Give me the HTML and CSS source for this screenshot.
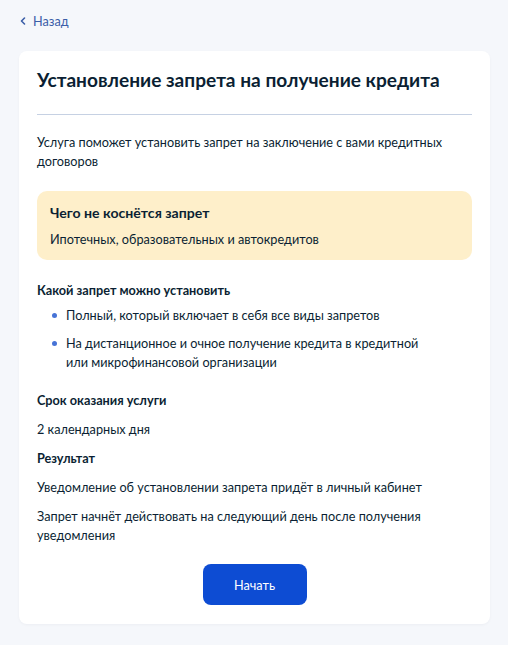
FILE: index.html
```html
<!doctype html>
<html lang="ru">
<head>
  <meta charset="utf-8">
  <title>Установление запрета на получение кредита</title>
  <link rel="stylesheet" href="styles.css">
</head>
<body>
<div class="page">
  <a class="back" href="#">
    <svg class="back-icon" width="6" height="8" viewBox="0 0 6 8"><path d="M4.5 1 L1.5 4 L4.5 7" fill="none" stroke="currentColor" stroke-width="1.6" stroke-linecap="round" stroke-linejoin="round"/></svg>
    Назад
  </a>

  <div class="card">
    <h1 class="title">Установление запрета на получение кредита</h1>
    <hr class="divider">

    <p class="text">Услуга поможет установить запрет на заключение с вами кредитных договоров</p>

    <div class="notice">
      <h3 class="notice-title">Чего не коснётся запрет</h3>
      <p class="notice-text">Ипотечных, образовательных и автокредитов</p>
    </div>

    <h4 class="subtitle">Какой запрет можно установить</h4>
    <ul class="list">
      <li>Полный, который включает в себя все виды запретов</li>
      <li>На дистанционное и очное получение кредита в кредитной или микрофинансовой организации</li>
    </ul>

    <h4 class="subtitle">Срок оказания услуги</h4>
    <p class="text">2 календарных дня</p>

    <h4 class="subtitle">Результат</h4>
    <p class="text">Уведомление об установлении запрета придёт в личный кабинет</p>
    <p class="text">Запрет начнёт действовать на следующий день после получения уведомления</p>

    <div class="actions">
      <button class="btn" type="button">Начать</button>
    </div>
  </div>
</div>
</body>
</html>
```

FILE: styles.css
```css
*,
*:before,
*:after {
	box-sizing: border-box;
}

body {
	margin: 0;
	background-color: #f5f7fb;
	font-family: "Lato", "Noto Sans", sans-serif;
	font-size: 12.7px;
	line-height: 19px;
	color: #0b1f33;
}

.page {
	padding: 11px 18px 20px 19px;
}

.back {
	display: inline-flex;
	align-items: center;
	gap: 7px;
	color: #3b5ea8;
	text-decoration: none;
	font-size: 12.7px;
	line-height: 19px;
}

.back-icon {
	margin-left: 1px;
}

.card {
	margin-top: 20px;
	padding: 17px 18px 19px 18px;
	background: #fff;
	border-radius: 8px;
	box-shadow: 0 1px 3px rgba(11,31,51,0.04);
}

.title {
	margin: 0;
	font-size: 19.1px;
	line-height: 24px;
	font-weight: 700;
}

.divider {
	margin: 22px 0 18px;
	border: none;
	border-bottom: 1px solid #c6d1e3;
}

.text {
	margin: 0 0 10px;
}

.notice {
	margin: 20px 0 21px;
	padding: 12px 13px 11px;
	background: #feefca;
	border-radius: 10px;
}

.notice-title {
	margin: 0 0 7px;
	font-size: 14.1px;
	line-height: 20px;
	font-weight: 700;
}

.notice-text {
	margin: 0;
}

.subtitle {
	margin: 0 0 6px;
	font-size: 12.7px;
	line-height: 19px;
	font-weight: 700;
}

.subtitle + .text {
	margin-top: 10px;
}

.list {
	margin: 0 0 19px;
	padding: 0 0 0 29px;
	list-style: none;
}

.list li {
	position: relative;
	max-width: 366px;
	margin-bottom: 9px;
}

.list li:before {
	content: "";
	position: absolute;
	left: -14px;
	top: 7px;
	width: 5px;
	height: 5px;
	border-radius: 50%;
	background: #4673d6;
}

.actions {
	display: flex;
	justify-content: center;
	padding-top: 9.5px;
}

.btn {
	width: 104px;
	height: 41px;
	border: none;
	border-radius: 8px;
	background: #0d4cd3;
	color: #fff;
	font-family: inherit;
	font-size: 12.7px;
}
```
